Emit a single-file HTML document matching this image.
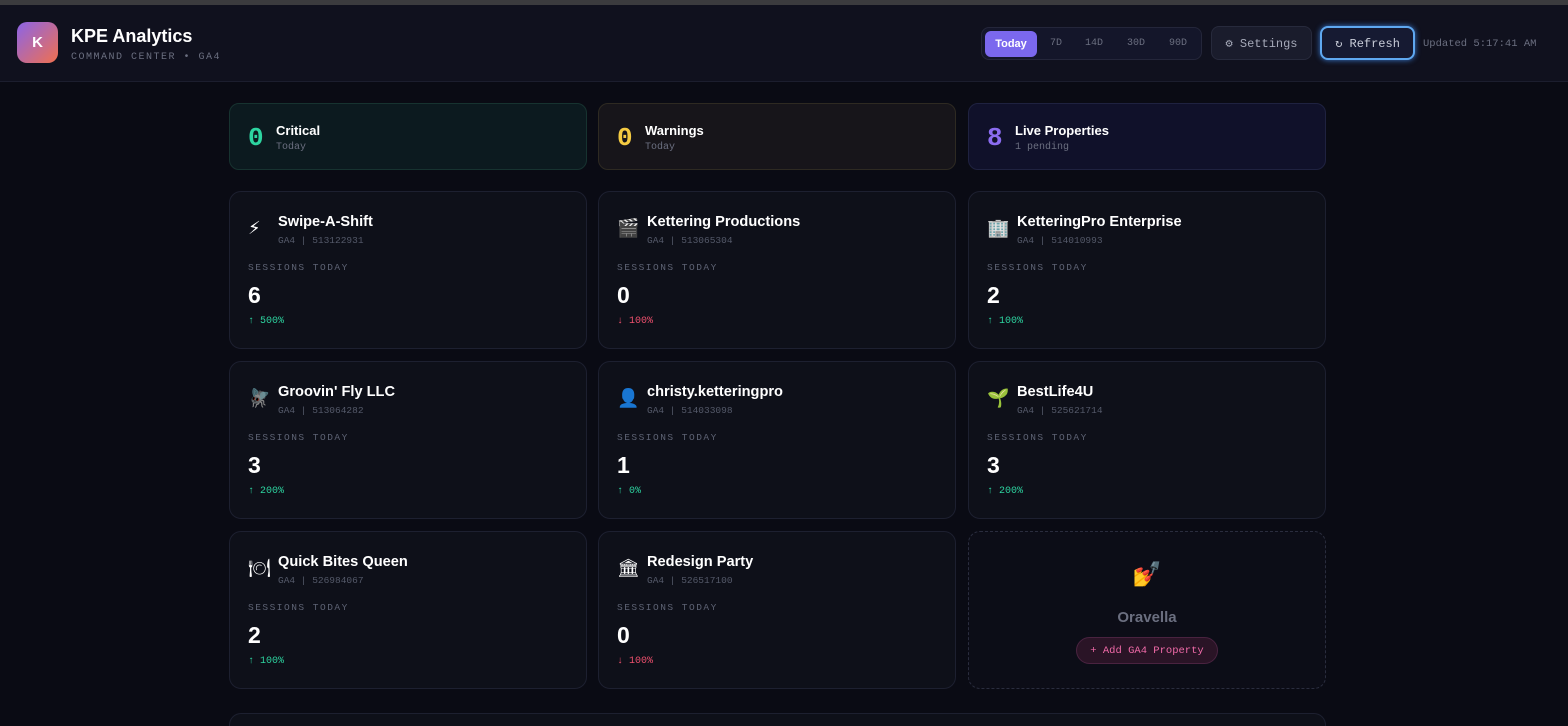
<!DOCTYPE html><html><head><style>
*{box-sizing:border-box;margin:0;padding:0}
html,body{width:1568px;height:726px;overflow:hidden}
body{background:#0a0b14;font-family:"Liberation Sans",sans-serif;color:#fff;position:relative}
.mono{font-family:"Liberation Mono",monospace}
.top{position:absolute;left:0;top:0;width:1568px;height:5px;background:#3b3b3e}
.hdr{position:absolute;left:0;top:5px;width:1568px;height:77px;background:#10111e;border-bottom:1px solid #1c1e2e}
.logo{position:absolute;left:17px;top:17px;width:41px;height:41px;border-radius:10px;background:linear-gradient(135deg,#8b64e8,#f0704f);font-weight:bold;font-size:15px;display:flex;align-items:center;justify-content:center}
.t1{position:absolute;left:71px;top:21px;font-size:18px;font-weight:bold}
.t2{position:absolute;left:71px;top:47px;font-size:10px;letter-spacing:1.5px;color:#6b6f80}
.seg{position:absolute;left:981px;top:22px;width:221px;height:33px;border:1px solid #24263a;border-radius:8px;background:#14162a}
.seg span{position:absolute;top:10px;font-size:10px;color:#6b6f80}
.today{position:absolute;left:3px;top:3px;width:52px;height:26px;background:#7b68ee;border-radius:6px;font-size:11px;font-weight:bold;display:flex;align-items:center;justify-content:center}
.btn{position:absolute;top:21px;height:34px;border-radius:8px;font-size:12px;display:flex;align-items:center;justify-content:center}
.card{position:absolute;width:358px;border:1px solid #1d2030;border-radius:12px;background:#0e1019}
.ic{position:absolute;left:18px;top:26px;font-size:18px;font-family:"DejaVu Sans",sans-serif}
.nm{position:absolute;left:48px;top:22px;font-size:14.6px;font-weight:bold}
.id{position:absolute;left:48px;top:43px;font-size:9.5px;color:#555a6a}
.lb{position:absolute;left:18px;top:70px;font-size:9.5px;letter-spacing:1.5px;color:#5d6273}
.num{position:absolute;left:18px;top:90px;font-size:23px;font-weight:bold}
.ch{position:absolute;left:18px;top:124px;font-size:10px}
.up{color:#2dd4a0}.dn{color:#f0506e}
.sum{position:absolute;top:103px;width:358px;height:67px;border-radius:10px}
.sum .n{position:absolute;left:18px;top:19px;font-size:26px;font-weight:bold;font-family:"Liberation Mono",monospace}
.sum .a{position:absolute;left:46px;top:19px;font-size:13px;font-weight:bold}
.sum .b{position:absolute;left:46px;top:38px;font-size:10px;color:#6b6f80}
</style></head><body>
<div class="top"></div>
<div class="hdr">
<div class="logo">K</div>
<div class="t1">KPE Analytics</div>
<div class="t2 mono">COMMAND CENTER • GA4</div>
<div class="seg"><div class="today">Today</div><span class="mono" style="left:68px">7D</span><span class="mono" style="left:103px">14D</span><span class="mono" style="left:145px">30D</span><span class="mono" style="left:187px">90D</span></div>
<div class="btn mono" style="left:1211px;width:101px;background:#1a1c2c;border:1px solid #272a3c;color:#a5a9b8">⚙ Settings</div>
<div class="btn mono" style="left:1320px;width:95px;background:#161a32;border:2px solid #5fa8f0;box-shadow:0 0 6px #3a7ad0;color:#c8ccd8">↻ Refresh</div>
<div class="mono" style="position:absolute;left:1423px;top:33px;font-size:10.5px;color:#6b6f80">Updated 5:17:41 AM</div>
</div>
<div class="sum" style="left:229px;background:#0c1a1f;border:1px solid #173330"><div class="n" style="color:#2dd4a0">0</div><div class="a">Critical</div><div class="b mono">Today</div></div>
<div class="sum" style="left:598px;background:#17151a;border:1px solid #2e2a22"><div class="n" style="color:#f5cb42">0</div><div class="a">Warnings</div><div class="b mono">Today</div></div>
<div class="sum" style="left:968px;background:#10112a;border:1px solid #1f2240"><div class="n" style="color:#8b6cf0">8</div><div class="a">Live Properties</div><div class="b mono">1 pending</div></div>

<div class="card" style="left:229px;top:191px;height:158px"><div class="ic">⚡</div><div class="nm">Swipe-A-Shift</div><div class="id mono">GA4 | 513122931</div><div class="lb mono">SESSIONS TODAY</div><div class="num">6</div><div class="ch mono up">↑ 500%</div></div>
<div class="card" style="left:598px;top:191px;height:158px"><div class="ic">🎬</div><div class="nm">Kettering Productions</div><div class="id mono">GA4 | 513065304</div><div class="lb mono">SESSIONS TODAY</div><div class="num">0</div><div class="ch mono dn">↓ 100%</div></div>
<div class="card" style="left:968px;top:191px;height:158px"><div class="ic">🏢</div><div class="nm">KetteringPro Enterprise</div><div class="id mono">GA4 | 514010993</div><div class="lb mono">SESSIONS TODAY</div><div class="num">2</div><div class="ch mono up">↑ 100%</div></div>

<div class="card" style="left:229px;top:361px;height:158px"><div class="ic">🪰</div><div class="nm">Groovin' Fly LLC</div><div class="id mono">GA4 | 513064282</div><div class="lb mono">SESSIONS TODAY</div><div class="num">3</div><div class="ch mono up">↑ 200%</div></div>
<div class="card" style="left:598px;top:361px;height:158px"><div class="ic">👤</div><div class="nm">christy.ketteringpro</div><div class="id mono">GA4 | 514033098</div><div class="lb mono">SESSIONS TODAY</div><div class="num">1</div><div class="ch mono up">↑ 0%</div></div>
<div class="card" style="left:968px;top:361px;height:158px"><div class="ic">🌱</div><div class="nm">BestLife4U</div><div class="id mono">GA4 | 525621714</div><div class="lb mono">SESSIONS TODAY</div><div class="num">3</div><div class="ch mono up">↑ 200%</div></div>

<div class="card" style="left:229px;top:531px;height:158px"><div class="ic">🍽</div><div class="nm">Quick Bites Queen</div><div class="id mono">GA4 | 526984067</div><div class="lb mono">SESSIONS TODAY</div><div class="num">2</div><div class="ch mono up">↑ 100%</div></div>
<div class="card" style="left:598px;top:531px;height:158px"><div class="ic">🏛</div><div class="nm">Redesign Party</div><div class="id mono">GA4 | 526517100</div><div class="lb mono">SESSIONS TODAY</div><div class="num">0</div><div class="ch mono dn">↓ 100%</div></div>
<div class="card" style="left:968px;top:531px;height:158px;border:1px dashed #2a2d3e;background:#0c0d17">
<div style="position:absolute;left:0;width:100%;top:28px;text-align:center;font-size:24px;color:#c9a040;font-family:'DejaVu Sans',sans-serif">💅</div>
<div style="position:absolute;left:0;width:100%;top:77px;text-align:center;font-size:15px;font-weight:bold;color:#6b6f80">Oravella</div>
<div class="mono" style="position:absolute;left:107px;top:105px;width:142px;height:27px;border-radius:14px;background:#2a1426;border:1px solid #4a2340;color:#f06aa8;font-size:10.5px;display:flex;align-items:center;justify-content:center">+ Add GA4 Property</div>
</div>
<div class="card" style="left:229px;top:713px;width:1097px;height:13px;border-bottom:none;border-radius:12px 12px 0 0"></div>
</body></html>
